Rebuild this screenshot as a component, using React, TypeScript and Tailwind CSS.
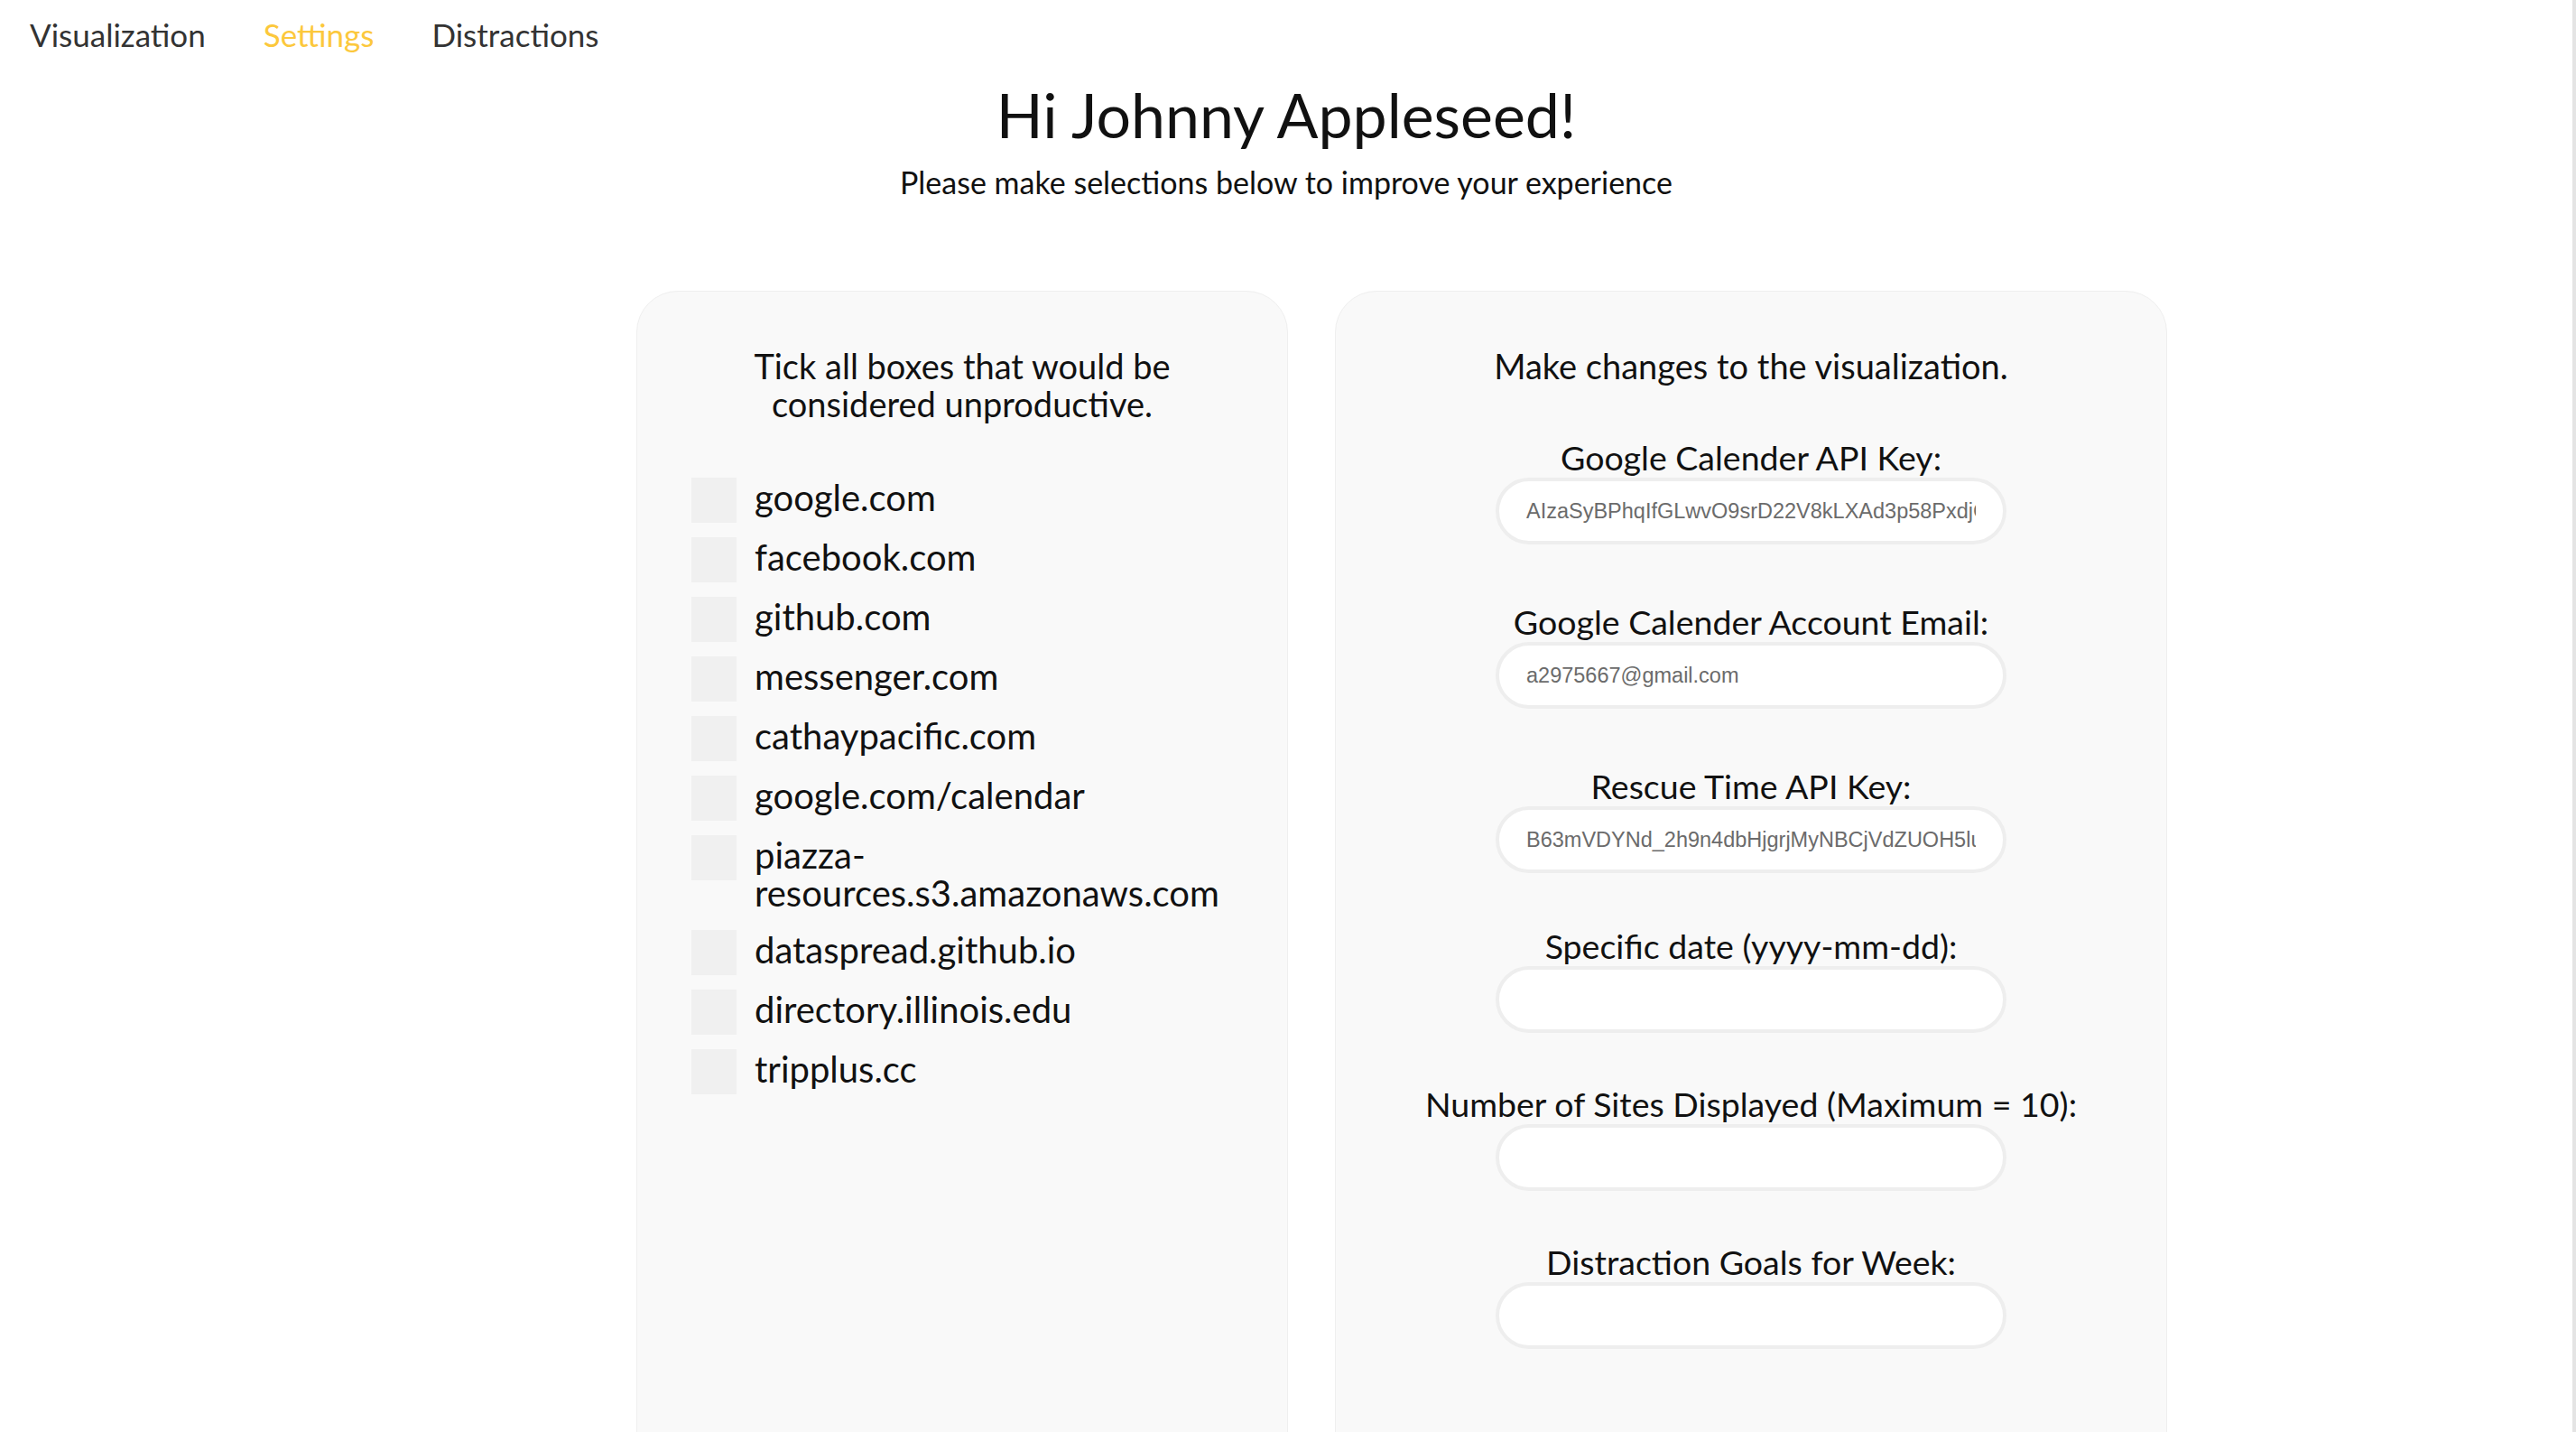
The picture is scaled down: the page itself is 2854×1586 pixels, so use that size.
import React from 'react';

const sites = [
  'google.com',
  'facebook.com',
  'github.com',
  'messenger.com',
  'cathaypacific.com',
  'google.com/calendar',
  'piazza-resources.s3.amazonaws.com',
  'dataspread.github.io',
  'directory.illinois.edu',
  'tripplus.cc',
];

// label, value, margin above the group
const fields = [
  { label: 'Google Calender API Key:', value: 'AIzaSyBPhqIfGLwvO9srD22V8kLXAd3p58PxdjG', mt: 'mt-[60px]' },
  { label: 'Google Calender Account Email:', value: 'a2975667@gmail.com', mt: 'mt-[65px]' },
  { label: 'Rescue Time API Key:', value: 'B63mVDYNd_2h9n4dbHjgrjMyNBCjVdZUOH5lu', mt: 'mt-[65px]' },
  { label: 'Specific date (yyyy-mm-dd):', value: '', mt: 'mt-[60px]' },
  { label: 'Number of Sites Displayed (Maximum = 10):', value: '', mt: 'mt-[58px]' },
  { label: 'Distraction Goals for Week:', value: '', mt: 'mt-[58px]' },
];

function Nav() {
  return (
    <nav className="flex h-[76px] items-center text-[35px] text-[#333]">
      <a className="pl-[33px] pr-[32px]">Visualization</a>
      <a className="px-[32px] text-[#fcc83c]">Settings</a>
      <a className="px-[32px]">Distractions</a>
    </nav>
  );
}

function SitesCard() {
  return (
    <div className="h-[1320px] w-[722px] shrink-0 rounded-[46px] border border-[#efefef] bg-[#f9f9f9] pt-[61px] pl-[60px] pr-[20px]">
      <p className="pr-[40px] text-center text-[38px] leading-[42px]">
        Tick all boxes that would be
        <br />
        considered unproductive.
      </p>
      <ul className="mt-[61px] flex flex-col gap-[16px]">
        {sites.map((site) => (
          <li key={site} className="flex items-start gap-[20px]">
            <span className="block h-[50px] w-[50px] shrink-0 bg-[#f0f0f0]" />
            <span className="pt-[1px] pb-[4px] text-[40px] leading-[42px]">{site}</span>
          </li>
        ))}
      </ul>
    </div>
  );
}

function SettingsCard() {
  return (
    <div className="flex h-[1320px] w-[922px] shrink-0 flex-col items-center rounded-[46px] border border-[#efefef] bg-[#f9f9f9] pt-[61px]">
      <p className="text-center text-[38px] leading-[42px]">Make changes to the visualization.</p>
      {fields.map((f) => (
        <div key={f.label} className={`flex flex-col items-center ${f.mt}`}>
          <label className="text-[37.5px] leading-[42px]">{f.label}</label>
          <input
            readOnly
            value={f.value}
            className="mt-[1px] h-[74px] w-[566px] rounded-full border-[4px] border-[#eeeeee] bg-white pl-[30px] pr-[30px] text-[23.5px] text-[#6b6b6b] outline-none"
            style={{ fontFamily: '"Liberation Sans", Arial, sans-serif' }}
          />
        </div>
      ))}
    </div>
  );
}

export default function App() {
  return (
    <div
      className="h-[1586px] overflow-hidden border-r-[4px] border-[#e4e4e4] bg-white text-[#111]"
      style={{ fontFamily: 'Lato, "Open Sans", sans-serif' }}
    >
      <Nav />
      <div className="flex flex-col items-center">
        <h1 className="mt-[11px] text-[68px] leading-[80px]">Hi Johnny Appleseed!</h1>
        <p className="mt-[15px] text-[34px] leading-[40px]">Please make selections below to improve your experience</p>
      </div>
      <div className="mt-[100px] flex gap-[52px] pl-[705px]">
        <SitesCard />
        <SettingsCard />
      </div>
    </div>
  );
}
